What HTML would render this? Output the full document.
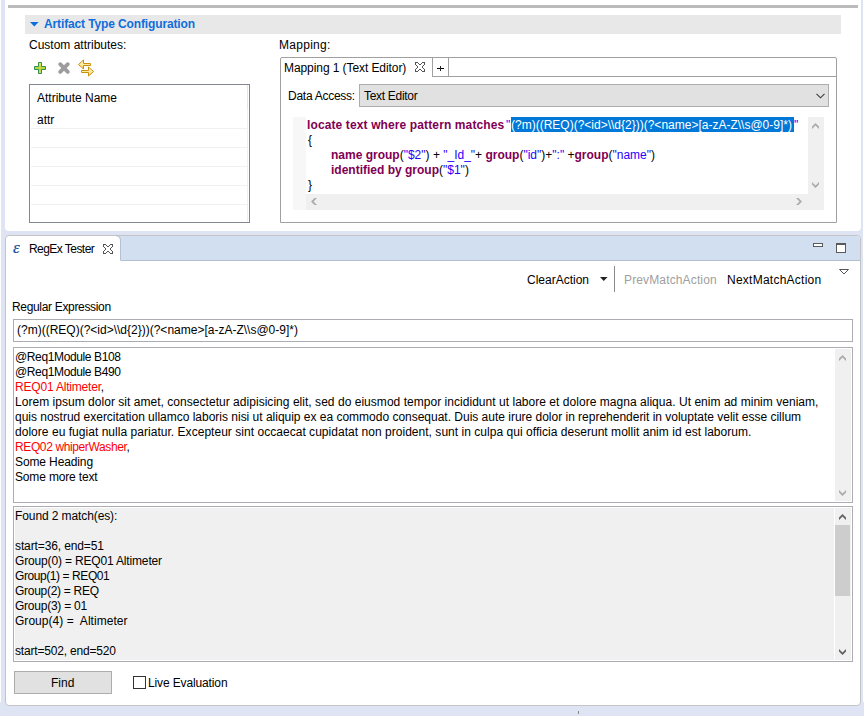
<!DOCTYPE html>
<html><head><meta charset="utf-8">
<style>
*{box-sizing:border-box;margin:0;padding:0}
html,body{width:864px;height:716px;overflow:hidden}
body{position:relative;background:#dfe4f5;font-family:"Liberation Sans",sans-serif;font-size:12px;color:#000}
.a{position:absolute}
.t{position:absolute;white-space:pre;line-height:15px;height:15px}
.b{font-weight:bold}
svg{position:absolute;overflow:visible}
</style></head><body>
<!-- white frame strips -->
<div class="a" style="left:0;top:0;width:1px;height:702px;background:#fff"></div>
<div class="a" style="left:863px;top:0;width:1px;height:702px;background:#fff"></div>

<!-- ============ upper panel ============ -->
<div class="a" style="left:5px;top:0;width:856px;height:231px;background:#fff;border-radius:0 0 4px 4px"></div>
<div class="a" style="left:8px;top:5px;width:850px;height:3px;background:#bbbbbb"></div>
<div class="a" style="left:25px;top:15px;width:816px;height:19px;background:#e8e8e8"></div>
<svg style="left:30px;top:22px" width="9" height="6"><path d="M0 0H8.6L4.3 4.4Z" fill="#0f6edb"/></svg>
<div class="t b" style="left:44px;top:17px;color:#0f6edb;letter-spacing:-0.13px">Artifact Type Configuration</div>

<div class="t" style="left:29px;top:38px">Custom attributes:</div>
<div class="t" style="left:279px;top:38px;letter-spacing:0.28px">Mapping:</div>

<!-- icons -->
<svg style="left:0;top:0" width="120" height="90">
  <defs>
    <linearGradient id="gp" x1="0" y1="0" x2="0" y2="1"><stop offset="0" stop-color="#f4f046"/><stop offset="0.55" stop-color="#b9d23e"/><stop offset="1" stop-color="#d5e25a"/></linearGradient>
    <linearGradient id="ga" x1="0" y1="0" x2="0" y2="1"><stop offset="0" stop-color="#fff8d0"/><stop offset="1" stop-color="#f8dc70"/></linearGradient>
  </defs>
  <path d="M38.5 62.5H41.5V66.5H45.5V69.5H41.5V73.5H38.5V69.5H34.5V66.5H38.5Z" fill="url(#gp)" stroke="#2f8f55" stroke-width="1"/>
  <path d="M60.2 64.2L67.8 71.8M67.8 64.2L60.2 71.8" stroke="#9d9d9d" stroke-width="3.9" stroke-linecap="round"/>
  <path d="M78.5 64.5L83.5 60V63.5H90.5V65.5H83.5V69Z" fill="url(#ga)" stroke="#c9900e" stroke-width="1" stroke-linejoin="round"/>
  <path d="M93.5 71.5L88.5 67V70.5H81.5V72.5H88.5V76Z" fill="url(#ga)" stroke="#c9900e" stroke-width="1" stroke-linejoin="round"/>
</svg>

<!-- attributes table -->
<div class="a" style="left:29px;top:84px;width:221px;height:139px;border:1px solid #828790;background:#fff"></div>
<div class="a" style="left:247px;top:85px;width:1px;height:24px;background:#e5e5e5"></div>
<div class="a" style="left:247px;top:109px;width:1px;height:113px;background:#f0f0f0"></div>
<div class="t" style="left:37px;top:91px">Attribute Name</div>
<div class="t" style="left:37px;top:113px">attr</div>
<div class="a" style="left:31px;top:128px;width:216px;height:1px;background:#f0f0f0"></div>
<div class="a" style="left:31px;top:147px;width:216px;height:1px;background:#f0f0f0"></div>
<div class="a" style="left:31px;top:166px;width:216px;height:1px;background:#f0f0f0"></div>
<div class="a" style="left:31px;top:185px;width:216px;height:1px;background:#f0f0f0"></div>
<div class="a" style="left:31px;top:204px;width:216px;height:1px;background:#f0f0f0"></div>

<!-- mapping tab folder -->
<div class="a" style="left:280px;top:57px;width:557px;height:166px;border:1px solid #a0a0a0;border-radius:2px 2px 0 0;background:#fff"></div>
<div class="t" style="left:284px;top:61px;letter-spacing:-0.08px">Mapping 1 (Text Editor)</div>
<svg id="cl1" style="left:415px;top:62px" width="10" height="10" shape-rendering="crispEdges" fill="#555">
  <rect x="0" y="0" width="3" height="1"/><rect x="7" y="0" width="3" height="1"/>
  <rect x="0" y="1" width="1" height="2"/><rect x="9" y="1" width="1" height="2"/>
  <rect x="3" y="1" width="1" height="1"/><rect x="6" y="1" width="1" height="1"/>
  <rect x="4" y="2" width="2" height="1"/>
  <rect x="1" y="3" width="1" height="1"/><rect x="8" y="3" width="1" height="1"/>
  <rect x="2" y="4" width="1" height="2"/><rect x="7" y="4" width="1" height="2"/>
  <rect x="1" y="6" width="1" height="1"/><rect x="8" y="6" width="1" height="1"/>
  <rect x="4" y="7" width="2" height="1"/>
  <rect x="0" y="7" width="1" height="2"/><rect x="9" y="7" width="1" height="2"/>
  <rect x="3" y="8" width="1" height="1"/><rect x="6" y="8" width="1" height="1"/>
  <rect x="0" y="9" width="3" height="1"/><rect x="7" y="9" width="3" height="1"/>
</svg>
<div class="a" style="left:432px;top:58px;width:1px;height:19px;background:#a0a0a0"></div>
<div class="a" style="left:448px;top:58px;width:1px;height:19px;background:#a0a0a0"></div>
<div class="a" style="left:432px;top:76px;width:404px;height:1px;background:#a0a0a0"></div>
<div class="a" style="left:437px;top:68px;width:7px;height:1px;background:#000"></div>
<div class="a" style="left:440px;top:66px;width:1px;height:5px;background:#222"></div>

<div class="t" style="left:288px;top:89px;letter-spacing:-0.26px">Data Access:</div>
<div class="a" style="left:359px;top:84px;width:470px;height:23px;border:1px solid #adadad;background:#e1e1e1"></div>
<div class="t" style="left:364px;top:89px;letter-spacing:-0.3px">Text Editor</div>
<svg style="left:816px;top:93px" width="9" height="6"><path d="M0.5 0.8L4.5 4.8L8.5 0.8" fill="none" stroke="#3c3c3c" stroke-width="1.1"/></svg>

<!-- code editor -->
<div class="a" style="left:293px;top:117px;width:13px;height:93px;background:#f7f7f7"></div>
<div class="a" style="left:306px;top:194px;width:518px;height:16px;background:#f0f0f0"></div>
<div class="a" style="left:808px;top:117px;width:16px;height:93px;background:#f0f0f0"></div>
<svg style="left:0;top:0" width="864" height="716">
  <path d="M812 129L815.5 125.5L819 129V126.5L815.5 123L812 126.5Z" fill="#ababab"/>
  <path d="M812 182L815.5 185.5L819 182V184.5L815.5 188L812 184.5Z" fill="#ababab"/>
  <path d="M317 198L313.5 201.5L317 205H314.5L311 201.5L314.5 198Z" fill="#ababab"/>
  <path d="M796 198L799.5 201.5L796 205H798.5L802 201.5L798.5 198Z" fill="#ababab"/>
</svg>
<div class="a" style="left:511px;top:117px;width:283px;height:15px;background:#0078d7"></div>
<div class="t b" style="left:307px;top:118px;color:#7f0055;letter-spacing:0.12px">locate text where pattern matches</div>
<div class="t" style="left:506px;top:118px;color:#2a00ff">"</div>
<div class="t" style="left:511px;top:118px;color:#fff">(?m)((REQ)(?&lt;id&gt;\\d{2}))(?&lt;name&gt;[a-zA-Z\\s@0-9]*)</div>
<div class="t" style="left:794px;top:118px;color:#2a00ff">"</div>
<div class="t" style="left:308px;top:133px">{</div>
<div class="t b" style="left:331px;top:148px;color:#7f0055">name group<span style="font-weight:normal;color:#000">(</span><span style="font-weight:normal;color:#2a00ff">"$2"</span><span style="font-weight:normal;color:#000">) + </span><span style="font-weight:normal;color:#2a00ff">"_Id_"</span><span style="font-weight:normal;color:#000">+ </span>group<span style="font-weight:normal;color:#000">(</span><span style="font-weight:normal;color:#2a00ff">"id"</span><span style="font-weight:normal;color:#000">)+</span><span style="font-weight:normal;color:#2a00ff">":"</span><span style="font-weight:normal;color:#000"> +</span>group<span style="font-weight:normal;color:#000">(</span><span style="font-weight:normal;color:#2a00ff">"name"</span><span style="font-weight:normal;color:#000">)</span></div>
<div class="t b" style="left:331px;top:163px;color:#7f0055">identified by group<span style="font-weight:normal;color:#000">(</span><span style="font-weight:normal;color:#2a00ff">"$1"</span><span style="font-weight:normal;color:#000">)</span></div>
<div class="t" style="left:308px;top:178px">}</div>

<!-- ============ lower view ============ -->
<div class="a" style="left:5px;top:235px;width:856px;height:471px;background:#fff;border:1px solid #c4c4c4;border-radius:4px"></div>
<svg style="left:0;top:0" width="864" height="716">
  <path d="M114 236H856Q860 236 860 240V260H114Z" fill="#d1dff0"/>
  <path d="M6 260V241Q6 236 11 236H115Q120 236 120 241V261H6Z" fill="#fff"/>
  <path d="M115.5 235.5Q120.5 235.5 120.5 240.5V260.5" fill="none" stroke="#b5c0d0" stroke-width="1"/>
  <rect x="121" y="260" width="739" height="1" fill="#b3bfd0"/>
</svg>
<div class="t" style="left:29px;top:242px;letter-spacing:-0.55px">RegEx Tester</div>
<div class="t" style="left:13px;top:240px;font-family:'Liberation Serif';font-style:italic;font-size:17px;color:#1a4d9e;-webkit-text-stroke:0.2px #1a4d9e">ε</div>


<svg style="left:103px;top:244px" width="10" height="10" shape-rendering="crispEdges" fill="#555">
  <rect x="0" y="0" width="3" height="1"/><rect x="7" y="0" width="3" height="1"/>
  <rect x="0" y="1" width="1" height="2"/><rect x="9" y="1" width="1" height="2"/>
  <rect x="3" y="1" width="1" height="1"/><rect x="6" y="1" width="1" height="1"/>
  <rect x="4" y="2" width="2" height="1"/>
  <rect x="1" y="3" width="1" height="1"/><rect x="8" y="3" width="1" height="1"/>
  <rect x="2" y="4" width="1" height="2"/><rect x="7" y="4" width="1" height="2"/>
  <rect x="1" y="6" width="1" height="1"/><rect x="8" y="6" width="1" height="1"/>
  <rect x="4" y="7" width="2" height="1"/>
  <rect x="0" y="7" width="1" height="2"/><rect x="9" y="7" width="1" height="2"/>
  <rect x="3" y="8" width="1" height="1"/><rect x="6" y="8" width="1" height="1"/>
  <rect x="0" y="9" width="3" height="1"/><rect x="7" y="9" width="3" height="1"/>
</svg>
<!-- min / max -->
<div class="a" style="left:813px;top:243px;width:10px;height:4px;border:1px solid #5a5a5a;background:#fff"></div>
<div class="a" style="left:836px;top:243px;width:10px;height:10px;border:1px solid #5a5a5a;border-top-width:2px;background:#fff"></div>

<!-- toolbar -->
<div class="t" style="left:527px;top:273px">ClearAction</div>
<svg style="left:600px;top:277px" width="8" height="5"><path d="M0 0H7.5L3.75 4Z" fill="#222"/></svg>
<div class="a" style="left:614px;top:266px;width:1px;height:26px;background:#8a8a8a"></div>
<div class="t" style="left:624px;top:273px;color:#a0a0a0;letter-spacing:0.14px">PrevMatchAction</div>
<div class="t" style="left:727px;top:273px;letter-spacing:0.25px">NextMatchAction</div>
<svg style="left:839px;top:269px" width="10" height="6"><path d="M0.5 0.5H9.5L5 5Z" fill="#fff" stroke="#555" stroke-width="1"/></svg>

<div class="t" style="left:12px;top:300px;letter-spacing:-0.33px">Regular Expression</div>
<div class="a" style="left:13px;top:319px;width:840px;height:23px;border:1px solid #abadb3;background:#fff"></div>
<div class="t" style="left:17px;top:323px">(?m)((REQ)(?&lt;id&gt;\\d{2}))(?&lt;name&gt;[a-zA-Z\\s@0-9]*)</div>

<!-- text area -->
<div class="a" style="left:13px;top:347px;width:840px;height:156px;border:1px solid #abadb3;background:#fff"></div>
<div class="a" style="left:835px;top:349px;width:16px;height:152px;background:#f0f0f0"></div>
<svg style="left:0;top:0" width="864" height="716"><path d="M839 361L842.5 357.5L846 361V358.5L842.5 355L839 358.5Z" fill="#ababab"/><path d="M839 490L842.5 493.5L846 490V492.5L842.5 496L839 492.5Z" fill="#ababab"/></svg>
<div class="t" style="left:15px;top:350px;letter-spacing:-0.37px">@Req1Module B108</div>
<div class="t" style="left:15px;top:365px;letter-spacing:-0.37px">@Req1Module B490</div>
<div class="t" style="left:15px;top:380px;letter-spacing:-0.19px"><span style="color:#f00">REQ01 Altimeter</span>,</div>
<div class="t" style="left:15px;top:395px;letter-spacing:0.034px">Lorem ipsum dolor sit amet, consectetur adipisicing elit, sed do eiusmod tempor incididunt ut labore et dolore magna aliqua. Ut enim ad minim veniam,</div>
<div class="t" style="left:15px;top:410px;letter-spacing:-0.011px">quis nostrud exercitation ullamco laboris nisi ut aliquip ex ea commodo consequat. Duis aute irure dolor in reprehenderit in voluptate velit esse cillum</div>
<div class="t" style="left:15px;top:425px;letter-spacing:0.034px">dolore eu fugiat nulla pariatur. Excepteur sint occaecat cupidatat non proident, sunt in culpa qui officia deserunt mollit anim id est laborum.</div>
<div class="t" style="left:15px;top:440px;letter-spacing:-0.38px"><span style="color:#f00">REQ02 whiperWasher</span>,</div>
<div class="t" style="left:15px;top:455px;letter-spacing:-0.12px">Some Heading</div>
<div class="t" style="left:15px;top:470px;letter-spacing:-0.16px">Some more text</div>

<!-- results -->
<div class="a" style="left:13px;top:506px;width:840px;height:156px;border:1px solid #abadb3;background:#f0f0f0;box-shadow:inset 1px 1px 0 #fff,inset -1px -1px 0 #fff"></div>
<div class="a" style="left:834px;top:508px;width:1px;height:152px;background:#fff"></div>
<div class="a" style="left:835px;top:525px;width:15px;height:71px;background:#cdcdcd"></div>
<svg style="left:0;top:0" width="864" height="716"><path d="M839 520L842.5 516.5L846 520V517.5L842.5 514L839 517.5Z" fill="#606060"/><path d="M839 649L842.5 652.5L846 649V651.5L842.5 655L839 651.5Z" fill="#606060"/></svg>
<div class="t" style="left:15px;top:509px;letter-spacing:-0.1px">Found 2 match(es):</div>
<div class="t" style="left:15px;top:539px;letter-spacing:-0.12px">start=36, end=51</div>
<div class="t" style="left:15px;top:554px;letter-spacing:-0.16px">Group(0) = REQ01 Altimeter</div>
<div class="t" style="left:15px;top:569px;letter-spacing:-0.42px">Group(1) = REQ01</div>
<div class="t" style="left:15px;top:584px;letter-spacing:-0.28px">Group(2) = REQ</div>
<div class="t" style="left:15px;top:599px;letter-spacing:-0.24px">Group(3) = 01</div>
<div class="t" style="left:15px;top:614px;letter-spacing:0.04px">Group(4) =  Altimeter</div>
<div class="t" style="left:15px;top:644px;letter-spacing:-0.19px">start=502, end=520</div>

<!-- buttons -->
<div class="a" style="left:14px;top:671px;width:98px;height:23px;border:1px solid #adadad;background:#e1e1e1"></div>
<div class="t" style="left:51px;top:676px">Find</div>
<div class="a" style="left:133px;top:676px;width:13px;height:13px;border:1px solid #333;background:#fff"></div>
<div class="t" style="left:148px;top:676px;letter-spacing:-0.13px">Live Evaluation</div>

<div class="a" style="left:578px;top:711px;width:1px;height:3px;background:#8a8a80"></div>

</body></html>
